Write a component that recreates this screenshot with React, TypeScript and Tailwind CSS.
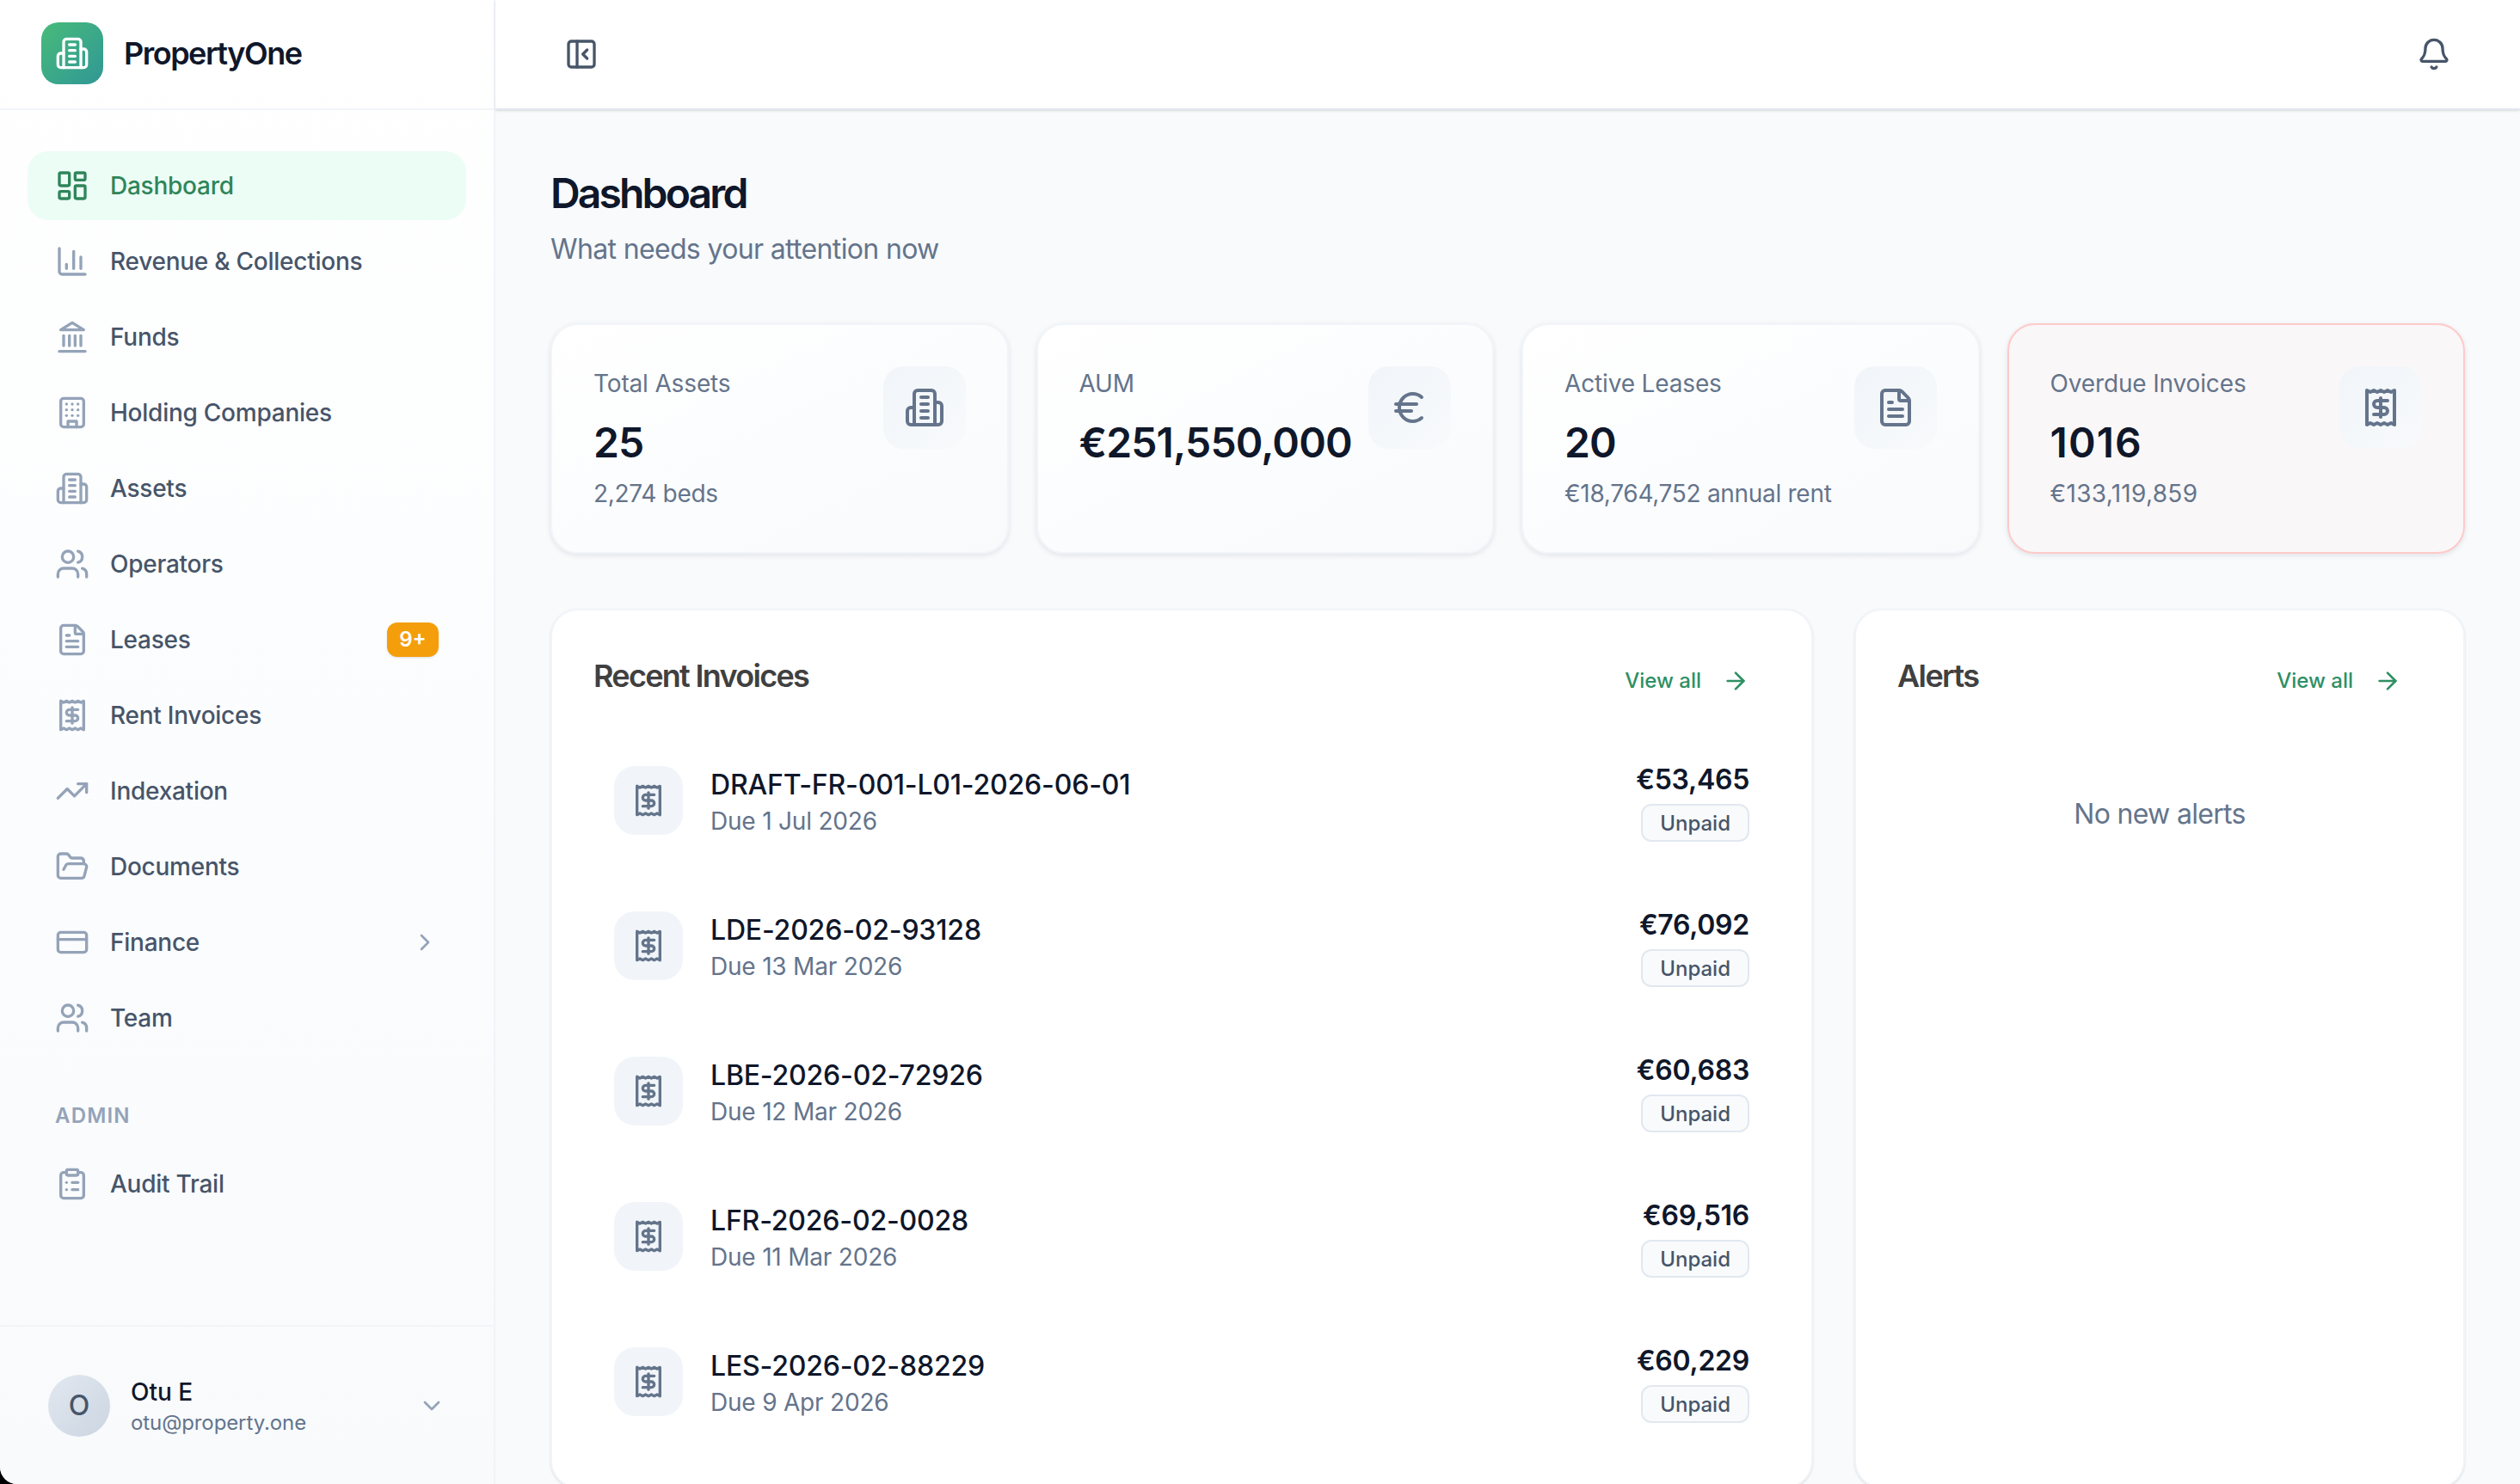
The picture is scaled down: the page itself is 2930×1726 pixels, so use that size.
import React from 'react';
import {
  LayoutDashboard,
  ChartColumn,
  Users,
  FileText,
  Receipt,
  TrendingUp,
  FolderOpen,
  CreditCard,
  ChevronRight,
  ChevronDown,
  ClipboardList,
  PanelLeftClose,
  Bell,
  Euro,
  ArrowRight,
} from 'lucide-react';

type IconProps = { className?: string; strokeWidth?: number };

const Building2Icon: React.FC<IconProps> = ({ className, strokeWidth = 2 }) => (
  <svg viewBox="0 0 24 24" fill="none" stroke="currentColor" strokeWidth={strokeWidth} strokeLinecap="round" strokeLinejoin="round" className={className}>
    <path d="M6 22V4a2 2 0 0 1 2-2h8a2 2 0 0 1 2 2v18Z" />
    <path d="M6 12H4a2 2 0 0 0-2 2v6a2 2 0 0 0 2 2h2" />
    <path d="M18 9h2a2 2 0 0 1 2 2v9a2 2 0 0 1-2 2h-2" />
    <path d="M10 6h4" />
    <path d="M10 10h4" />
    <path d="M10 14h4" />
    <path d="M10 18h4" />
  </svg>
);

const LandmarkIcon: React.FC<IconProps> = ({ className, strokeWidth = 2 }) => (
  <svg viewBox="0 0 24 24" fill="none" stroke="currentColor" strokeWidth={strokeWidth} strokeLinecap="round" strokeLinejoin="round" className={className}>
    <path d="M3 22h18" />
    <path d="M6 18v-7" />
    <path d="M10 18v-7" />
    <path d="M14 18v-7" />
    <path d="M18 18v-7" />
    <polygon points="12 2 20 7 4 7" />
  </svg>
);

const BuildingIcon: React.FC<IconProps> = ({ className, strokeWidth = 2 }) => (
  <svg viewBox="0 0 24 24" fill="none" stroke="currentColor" strokeWidth={strokeWidth} strokeLinecap="round" strokeLinejoin="round" className={className}>
    <rect x="4" y="2" width="16" height="20" rx="2" />
    <path d="M9 22v-4h6v4" />
    <path d="M8 6h.01" />
    <path d="M16 6h.01" />
    <path d="M12 6h.01" />
    <path d="M12 10h.01" />
    <path d="M12 14h.01" />
    <path d="M16 10h.01" />
    <path d="M16 14h.01" />
    <path d="M8 10h.01" />
    <path d="M8 14h.01" />
  </svg>
);

const navItems = [
  { label: 'Revenue & Collections', icon: ChartColumn },
  { label: 'Funds', icon: LandmarkIcon },
  { label: 'Holding Companies', icon: BuildingIcon },
  { label: 'Assets', icon: Building2Icon },
  { label: 'Operators', icon: Users },
  { label: 'Leases', icon: FileText, badge: '9+' },
  { label: 'Rent Invoices', icon: Receipt },
  { label: 'Indexation', icon: TrendingUp },
  { label: 'Documents', icon: FolderOpen },
  { label: 'Finance', icon: CreditCard, chevron: true },
  { label: 'Team', icon: Users },
];

const stats = [
  { label: 'Total Assets', value: '25', sub: '2,274 beds', icon: Building2Icon },
  { label: 'AUM', value: '€251,550,000', sub: '', icon: Euro },
  { label: 'Active Leases', value: '20', sub: '€18,764,752 annual rent', icon: FileText },
  { label: 'Overdue Invoices', value: '1016', sub: '€133,119,859', icon: Receipt, danger: true },
];

const invoices = [
  { id: 'DRAFT-FR-001-L01-2026-06-01', due: 'Due 1 Jul 2026', amount: '€53,465' },
  { id: 'LDE-2026-02-93128', due: 'Due 13 Mar 2026', amount: '€76,092' },
  { id: 'LBE-2026-02-72926', due: 'Due 12 Mar 2026', amount: '€60,683' },
  { id: 'LFR-2026-02-0028', due: 'Due 11 Mar 2026', amount: '€69,516' },
  { id: 'LES-2026-02-88229', due: 'Due 9 Apr 2026', amount: '€60,229' },
];

const ViewAll = () => (
  <div className="flex items-center gap-6 px-6 mt-[18px] text-[24px] leading-[32px] font-medium text-[#2f8f63]">
    <span>View all</span>
    <ArrowRight className="w-8 h-8" strokeWidth={2} />
  </div>
);

const Sidebar = () => (
  <aside className="w-[576px] shrink-0 flex flex-col border-r-2 border-[#f1f5f9] bg-gradient-to-b from-white to-[#f8fafc]">
    <div className="h-[128px] shrink-0 flex items-center gap-6 pl-12 pb-[2px] border-b-2 border-[#f1f5f9]">
      <div className="w-[72px] h-[72px] rounded-[20px] flex items-center justify-center text-white bg-gradient-to-br from-[#48bb78] to-[#319795]">
        <Building2Icon className="w-10 h-10" />
      </div>
      <span className="text-[36px] leading-[56px] font-semibold tracking-[-1.5px] text-[#0f172a]">PropertyOne</span>
    </div>

    <nav className="flex-1 flex flex-col gap-2 px-8 pt-12 tracking-[-0.25px]">
      <div className="h-20 rounded-3xl bg-[#ecfdf5] flex items-center gap-6 px-8 text-[28px] font-medium text-[#2f855a]">
        <LayoutDashboard className="w-10 h-10 shrink-0" strokeWidth={2} />
        <span>Dashboard</span>
      </div>
      {navItems.map((item) => (
        <div key={item.label} className="h-20 rounded-3xl flex items-center gap-6 px-8 text-[28px] font-medium text-[#475569]">
          <item.icon className="w-10 h-10 shrink-0 text-[#94a3b8]" strokeWidth={2} />
          <span className="flex-1">{item.label}</span>
          {item.badge && (
            <span className="w-[60px] h-10 rounded-xl bg-[#f59e0b] text-white text-[24px] font-semibold tracking-normal flex items-center justify-center shadow-sm">
              {item.badge}
            </span>
          )}
          {item.chevron && <ChevronRight className="w-8 h-8 text-[#94a3b8]" strokeWidth={2} />}
        </div>
      ))}
      <div className="px-8 mt-[50px] mb-[15px] text-[24px] leading-8 font-semibold tracking-[1.2px] text-[#94a3b8]">ADMIN</div>
      <div className="h-20 rounded-3xl flex items-center gap-6 px-8 text-[28px] font-medium text-[#475569]">
        <ClipboardList className="w-10 h-10 shrink-0 text-[#94a3b8]" strokeWidth={2} />
        <span>Audit Trail</span>
      </div>
    </nav>

    <div className="h-[185px] shrink-0 border-t-2 border-[#f1f5f9] flex items-center gap-6 pl-14 pr-14">
      <div className="w-[72px] h-[72px] rounded-full bg-gradient-to-br from-[#e2e8f0] to-[#cbd5e1] flex items-center justify-center text-[32px] font-medium text-[#475569]">
        O
      </div>
      <div className="flex-1">
        <div className="text-[28px] leading-[40px] font-medium text-[#0f172a]">Otu E</div>
        <div className="text-[24px] leading-[32px] tracking-[-0.1px] text-[#64748b]">otu@property.one</div>
      </div>
      <ChevronDown className="w-8 h-8 text-[#94a3b8]" strokeWidth={2} />
    </div>
  </aside>
);

export default function App() {
  return (
    <div className="h-[1726px] overflow-hidden bg-black font-[Inter,sans-serif]">
      <div className="h-full flex overflow-hidden rounded-bl-[20px] bg-[#f8fafc]">
        <Sidebar />
        <main className="flex-1 min-w-0 flex flex-col">
          <header className="h-[128px] shrink-0 bg-white border-b-2 border-[#e2e8f0] shadow-sm flex items-center justify-between px-16 text-[#475569]">
            <div className="p-4">
              <PanelLeftClose className="w-10 h-10" strokeWidth={2} />
            </div>
            <div className="p-4">
              <Bell className="w-10 h-10" strokeWidth={2} />
            </div>
          </header>

          <div className="px-16 pt-16">
            <h1 className="mt-px text-[48px] leading-[64px] font-semibold tracking-[-2.85px] text-[#0f172a]">Dashboard</h1>
            <p className="mt-[9px] text-[32px] leading-[48px] tracking-[-0.65px] text-[#64748b]">What needs your attention now</p>

            <div className="mt-[62px] grid grid-cols-4 gap-8">
              {stats.map((s) => (
                <div
                  key={s.label}
                  className={`h-[268px] rounded-[32px] border-2 p-12 flex justify-between shadow-[0_2px_6px_rgba(15,23,42,0.1)] ${
                    s.danger ? 'border-[#fecaca] bg-[#faf7f8]' : 'border-[#f1f5f9] bg-gradient-to-br from-white to-[#f8fafc]'
                  }`}
                >
                  <div className="min-w-0">
                    <div className="text-[28px] leading-[40px] tracking-[-0.15px] text-[#64748b]">{s.label}</div>
                    <div className={`mt-[13px] text-[48px] leading-[72px] font-semibold whitespace-nowrap text-[#0f172a] ${s.danger ? 'tracking-[1.1px]' : 'tracking-[-0.85px]'}`}>{s.value}</div>
                    {s.sub && (
                      <div className={`mt-[3px] text-[28px] leading-[40px] text-[#64748b] ${s.danger ? 'tracking-[0.3px]' : 'tracking-[-0.3px]'}`}>{s.sub}</div>
                    )}
                  </div>
                  <div className="w-24 h-24 shrink-0 rounded-3xl bg-gradient-to-br from-[#f1f5f9] to-[#f8fafc] flex items-center justify-center text-[#64748b]">
                    <s.icon className="w-12 h-12" strokeWidth={2} />
                  </div>
                </div>
              ))}
            </div>

            <div className="mt-16 grid grid-cols-[1468px_1fr] gap-12">
              <section className="h-[1023px] rounded-[32px] border-2 border-[#f1f5f9] bg-white p-12 shadow-sm">
                <div className="h-14 mb-[44px] flex items-start justify-between">
                  <h2 className="text-[36px] leading-[56px] font-semibold tracking-[-1.7px] text-[#404040]">Recent Invoices</h2>
                  <ViewAll />
                </div>
                <div className="flex flex-col gap-[23px]">
                  {invoices.map((inv) => (
                    <div key={inv.id} className="h-[146px] px-6 flex items-center gap-8">
                      <div className="w-20 h-20 shrink-0 rounded-3xl bg-[#f1f5f9] flex items-center justify-center text-[#64748b]">
                        <Receipt className="w-10 h-10" strokeWidth={2} />
                      </div>
                      <div className="flex-1 min-w-0 pt-[2px]">
                        <div className="text-[32px] leading-[48px] font-medium tracking-[-0.18px] text-[#0f172a]">{inv.id}</div>
                        <div className="-mt-[2px] text-[28px] leading-[40px] tracking-[-0.2px] text-[#64748b]">{inv.due}</div>
                      </div>
                      <div className="flex flex-col items-end">
                        <div className="text-[32px] leading-[48px] font-semibold tracking-[-0.27px] text-[#0f172a]">{inv.amount}</div>
                        <div className="mt-1 h-11 px-5 rounded-xl border-2 border-[#e2e8f0] bg-[#f8fafc] text-[24px] leading-[42px] font-medium text-[#475569]">Unpaid</div>
                      </div>
                    </div>
                  ))}
                </div>
              </section>

              <section className="h-[1023px] rounded-[32px] border-2 border-[#f1f5f9] bg-white p-12 shadow-sm">
                <div className="h-14 flex items-start justify-between">
                  <h2 className="text-[36px] leading-[56px] font-semibold tracking-[-1.6px] text-[#404040]">Alerts</h2>
                  <ViewAll />
                </div>
                <p className="mt-[109px] text-center text-[32px] leading-[48px] tracking-[-0.7px] text-[#64748b]">No new alerts</p>
              </section>
            </div>
          </div>
        </main>
      </div>
    </div>
  );
}
